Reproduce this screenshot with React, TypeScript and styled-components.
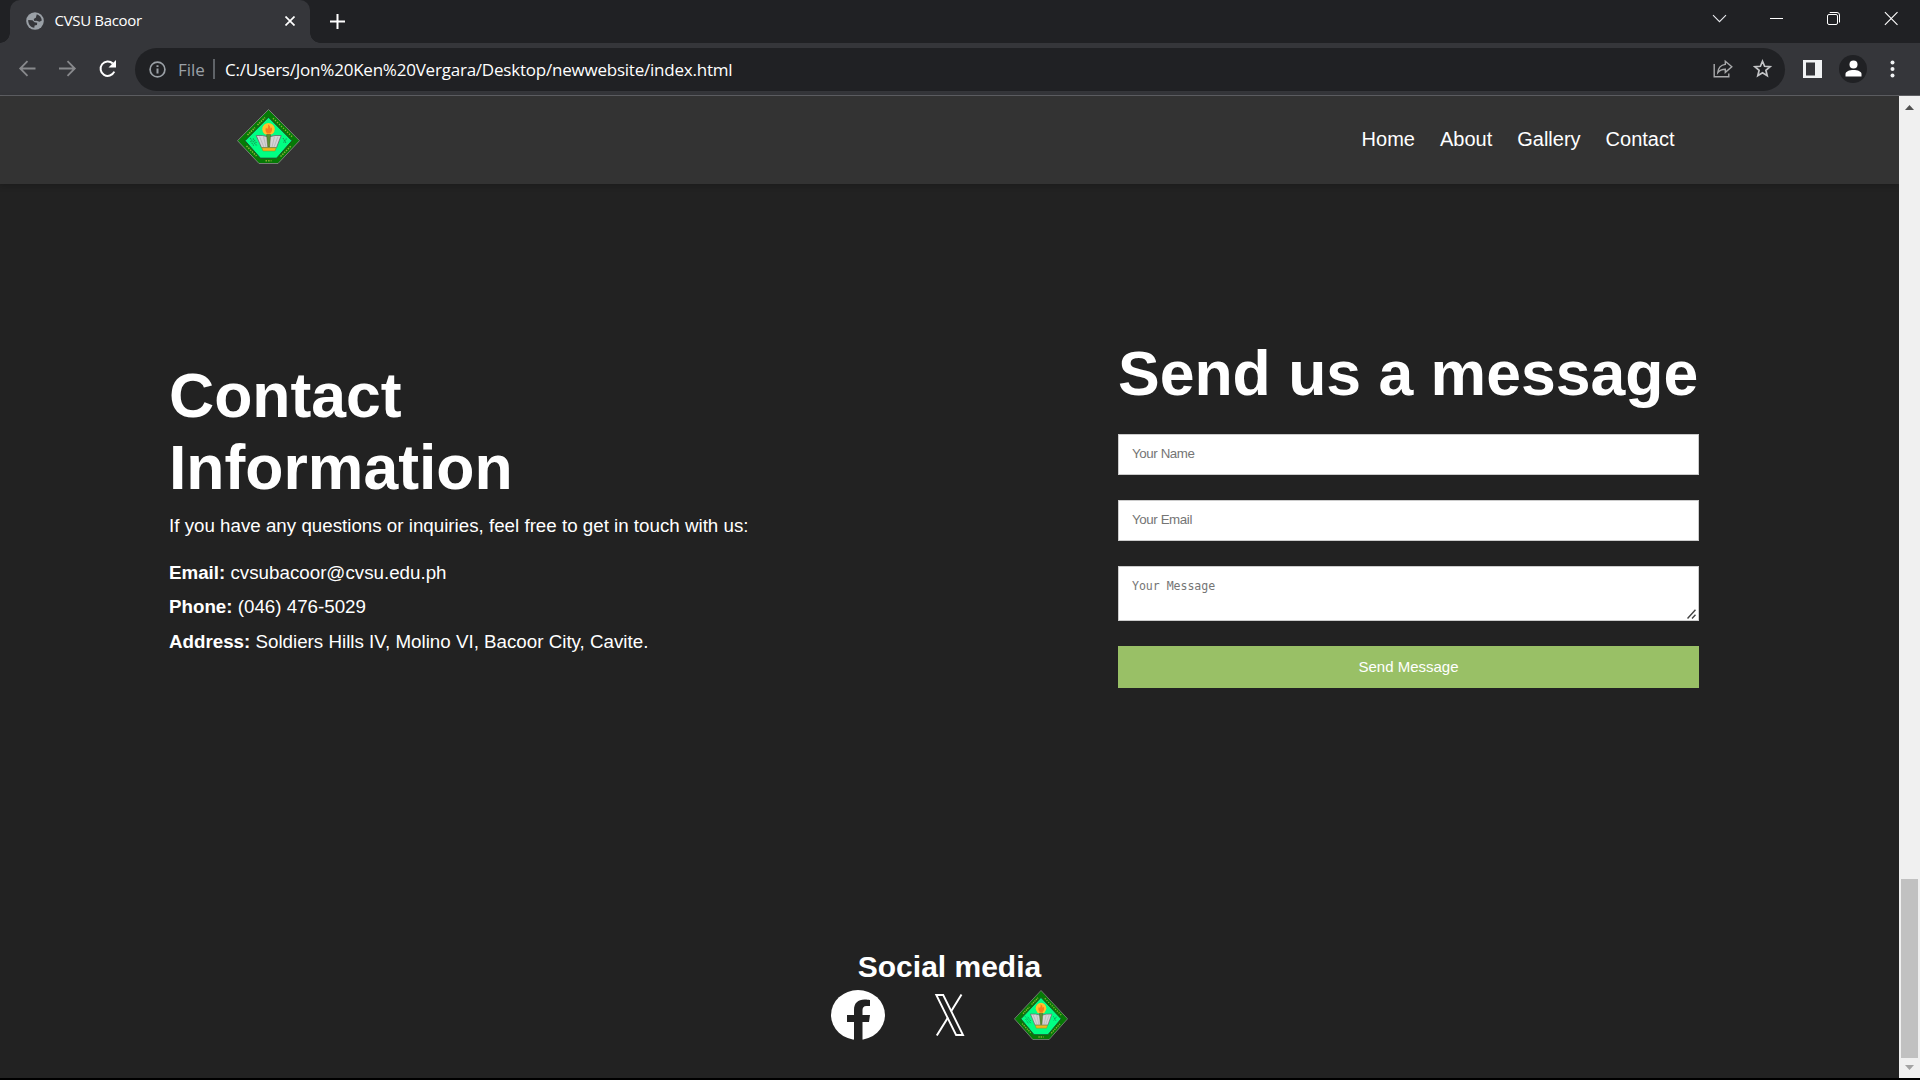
import React from "react";
import styled, { createGlobalStyle } from "styled-components";

const GlobalStyle = createGlobalStyle`
  * { box-sizing: border-box; }
  html, body { margin: 0; padding: 0; background: #000; }
  body { width: 1920px; height: 1080px; overflow: hidden; color: #fff; font-family: "Liberation Sans", Arial, sans-serif; }
  h1, h2, p { margin: 0; }
`;

const Window = styled.div`
  width: 1920px;
  height: 1078px;
  display: flex;
  flex-direction: column;
`;

const uiFont = `"Open Sans", "Noto Sans", sans-serif`;

const TabStrip = styled.div`
  height: 43px;
  flex: none;
  display: flex;
  background: #202124;
`;

const TabFoot = styled.div<{ $side: "left" | "right" }>`
  width: 10px;
  background: radial-gradient(circle at ${(p) => (p.$side === "left" ? "0" : "100%")} calc(100% - 10px), #202124 9.5px, #35363a 10px) bottom / 10px 10px no-repeat;
`;

const Tab = styled.div`
  width: 300px;
  display: flex;
  align-items: center;
  padding: 0 15px 2px 16px;
  border-radius: 10px 10px 0 0;
  background: #35363a;
`;

const TabTitle = styled.span`
  flex: 1;
  margin: 0 0 2px 10.5px;
  font: 15px/20px ${uiFont};
  letter-spacing: -0.32px;
  color: #fff;
`;

const NewTab = styled.div`
  display: flex;
  align-items: center;
  margin-left: 10px;
`;

const WindowControls = styled.div`
  display: flex;
  align-items: flex-start;
  margin-left: auto;
  padding: 10px 20px 0 0;
  gap: 39px;
`;

const Toolbar = styled.div`
  height: 53px;
  flex: none;
  display: flex;
  align-items: center;
  padding-bottom: 1px;
  background: #35363a;
  border-bottom: 1px solid #5f6064;
`;

const NavButtons = styled.div`
  width: 135px;
  display: flex;
  align-items: center;
  padding-left: 18px;
  gap: 20px;
`;

const Omnibox = styled.div`
  width: 1650px;
  height: 43px;
  margin-top: 1px;
  display: flex;
  align-items: center;
  padding: 0 12px 0 14px;
  border-radius: 22px;
  background: #202124;
  font: 17px/24px ${uiFont};
`;

const Scheme = styled.span`
  width: 35px;
  margin: 2px 0 0 12px;
  color: #9aa0a6;
`;

const Divider = styled.span`
  width: 2px;
  height: 20px;
  margin-bottom: 1px;
  background: #5f6368;
`;

const Url = styled.span`
  flex: 1;
  margin: 2px 0 0 10px;
  color: #fff;
  letter-spacing: -0.22px;
  white-space: nowrap;
`;

const OmniActions = styled.div`
  display: flex;
  align-items: center;
  gap: 20px;
`;

const Actions = styled.div`
  display: flex;
  align-items: center;
  margin-left: 18px;
`;

const Avatar = styled.div`
  width: 28px;
  height: 28px;
  margin: 0 23px 0 17px;
  display: flex;
  align-items: center;
  justify-content: center;
  border-radius: 50%;
  background: #202124;
`;

const Viewport = styled.div`
  flex: 1;
  display: flex;
  min-height: 0;
`;

const Page = styled.div`
  width: 1899px;
  display: flex;
  flex-direction: column;
  background: #222;
`;

const Header = styled.header`
  height: 88px;
  flex: none;
  display: flex;
  justify-content: space-between;
  align-items: flex-start;
  padding: 13px 224.5px 0 237px;
  background: #333;
  box-shadow: 0 2px 6px rgba(0, 0, 0, 0.2);
`;

const Nav = styled.nav`
  display: flex;
  gap: 25px;
  padding-top: 18px;
  font-size: 20px;
  line-height: 24px;
`;

const NavLink = styled.a`
  color: #fff;
`;

const Contact = styled.main`
  height: 746px;
  flex: none;
  display: flex;
  justify-content: space-between;
  padding: 0 200px 0 169px;
`;

const Info = styled.section`
  width: 600px;
  padding-top: 175px;
`;

const Title = styled.h1`
  font-size: 62.5px;
  line-height: 72px;
  font-weight: 700;
  white-space: nowrap;
`;

const Line = styled.p<{ $gap?: number }>`
  font-size: 18.75px;
  line-height: 24px;
  margin-top: ${(p) => p.$gap ?? 10.5}px;
  white-space: nowrap;
`;

const Form = styled.form`
  width: 581px;
  display: flex;
  flex-direction: column;
  padding-top: 153px;
`;

const fieldBox = `
  width: 100%;
  border: 1px solid #ccc;
  border-radius: 0;
  background: #fff;
  outline: none;
  display: block;
  &::placeholder { color: #757575; opacity: 1; }
`;

const Fields = styled.div`
  display: flex;
  flex-direction: column;
  gap: 25px;
  padding-top: 25px;
`;

const Field = styled.input`
  ${fieldBox}
  height: 41px;
  padding: 10px 13px 13px;
  font: 13.33px "Liberation Sans", Arial, sans-serif;
  letter-spacing: -0.4px;
`;

const MessageBox = styled.div`
  position: relative;
`;

const MessageField = styled.textarea`
  ${fieldBox}
  height: 55px;
  padding: 12px 13px;
  font: 11.6px/15px "DejaVu Sans Mono", monospace;
  letter-spacing: -0.05px;
  resize: none;
`;

const Grip = styled.svg`
  position: absolute;
  right: 3px;
  bottom: 2px;
`;

const SendButton = styled.button`
  height: 42px;
  padding: 0 0 2px;
  border: 0;
  background: #99c066;
  color: #fff;
  font: 15px "Liberation Sans", Arial, sans-serif;
`;

const Social = styled.footer`
  display: flex;
  flex-direction: column;
  align-items: center;
  padding-top: 20px;
`;

const SocialTitle = styled.h2`
  font-size: 30px;
  line-height: 34px;
  margin-bottom: 6px;
`;

const SocialLinks = styled.div`
  display: flex;
  gap: 37.5px;
`;

const Scrollbar = styled.div`
  width: 21px;
  display: flex;
  flex-direction: column;
  align-items: center;
  background: #f0f0f0;
`;

const Arrow = styled.div<{ $down?: boolean }>`
  width: 9px;
  height: 5px;
  margin: ${(p) => (p.$down ? "7px 0 0" : "9px 0 0")};
  background: ${(p) => (p.$down ? "#a3a3a3" : "#505050")};
  clip-path: ${(p) => (p.$down ? "polygon(0 0, 100% 0, 50% 100%)" : "polygon(50% 0, 100% 100%, 0 100%)")};
`;

const Thumb = styled.div`
  width: 17px;
  height: 179px;
  margin-top: auto;
  background: #c1c1c1;
`;

const ScrollEnd = styled.div`
  height: 20px;
`;

function Emblem({ width, height }: { width: number; height: number }) {
  return (
    <svg width={width} height={height} viewBox="0 0 63 55" preserveAspectRatio="none">
      <path d="M31.5 .5 62.5 31.7 41 54.5H22L.5 31.7Z" fill="#067a06" stroke="#858585" strokeWidth=".9" />
      <path d="M10.5 26 18 18.6M20.5 16 28 8.6" stroke="#8cae35" strokeWidth="1.6" strokeDasharray="1.5 .9" />
      <path d="M36 9.2 56 28.5" stroke="#8cae35" strokeWidth="1.5" strokeDasharray="1.3 1.5" />
      <path d="M9.5 37 19.5 47M43.5 47.5 54 37M28.5 51.7H34.5" stroke="#8cae35" strokeWidth="1.5" strokeDasharray="1.5 1.1" />
      <path d="M31.5 8.2 55 31.7 39.6 49.2H23.4L8 31.7Z" fill="#00ff83" stroke="#24452c" strokeWidth="1" />
      <path d="M13 29 20 37M13.5 32 17 37M16 29.5 19.5 34M46 29 49 34M49.5 29.5 46.5 33.5" stroke="#149a56" strokeWidth="1.1" strokeDasharray="1.4 .7" />
      <circle cx="31.5" cy="20.2" r="6.2" fill="#ffc02c" />
      <path d="M31 15.5Q34 17.5 33.2 19.5L34.8 18.5Q36 22 33 24.5H30.2Q27.5 22 29 18.5L30.2 20Q31.8 18 31 15.5Z" fill="#fb7a1c" />
      <path d="M19.2 26.5Q26 26 30 27.5H33.5Q37 26 44.2 26.5L39.5 38.7H24.5Z" fill="#d6d3d6" stroke="#666" strokeWidth=".8" />
      <path d="M22.5 27.5 26.8 38M41 27.5 37 38M26.5 27.5 29 38M37.5 27.5 35 38" stroke="#aaa" strokeWidth=".6" />
      <path d="M29.6 25.5H33.6L32.6 38H30.8Z" fill="#5c9130" stroke="#405a28" strokeWidth=".5" />
      <path d="M24.8 38.7H39.2L38 42H26Z" fill="#f1b51c" stroke="#7b8c20" strokeWidth=".5" />
    </svg>
  );
}

function BackIcon({ flip }: { flip?: boolean }) {
  return (
    <svg width="20" height="20" viewBox="0 0 20 20" fill="none" stroke="#88898c" strokeWidth="1.8">
      <path d={flip ? "M1 9.5H16.5M9.5 2.2 16.8 9.5 9.5 16.8" : "M17.5 9.5H2.2M9.5 2.2 2.2 9.5 9.5 16.8"} />
    </svg>
  );
}

export default function App() {
  return (
    <>
      <GlobalStyle />
      <Window>
        <TabStrip>
          <TabFoot $side="left" />
          <Tab>
            <svg width="18" height="18" viewBox="0 0 18 18">
              <circle cx="9" cy="9" r="8.8" fill="#9aa0a6" />
              <path d="M10.8 2.2C13.5 3 15.7 5.5 15.8 8.5L13.5 9.8 10.5 8.8 8.3 9 7.7 6.9 9.8 5.7ZM2.2 8 6.5 8.2 8.5 10.3 11.2 10.7 11 13 8.6 13.5 8.3 15.7C4.5 15.5 2 12 2.2 8Z" fill="#35363a" />
            </svg>
            <TabTitle>CVSU Bacoor</TabTitle>
            <svg width="10" height="10" viewBox="0 0 10 10" stroke="#fff" strokeWidth="1.7">
              <path d="M.5.5 9.5 9.5M9.5.5.5 9.5" />
            </svg>
          </Tab>
          <TabFoot $side="right" />
          <NewTab>
            <svg width="15" height="15" viewBox="0 0 15 15" stroke="#fff" strokeWidth="2">
              <path d="M7.5 0V15M0 7.5H15" />
            </svg>
          </NewTab>
          <WindowControls>
            <svg width="18" height="18" viewBox="0 0 18 18" fill="none" stroke="#e8eaed" strokeWidth="1.1">
              <path d="M2 5.2 8.5 11.7 15 5.2" />
            </svg>
            <svg width="18" height="18" viewBox="0 0 18 18" stroke="#fff">
              <path d="M2 8.5H15" />
            </svg>
            <svg width="18" height="18" viewBox="0 0 18 18" fill="none" stroke="#fff">
              <rect x="2.5" y="4.5" width="10" height="10" rx="1.5" />
              <path d="M4.7 2.5H12Q14.5 2.5 14.5 5V12.5" />
            </svg>
            <svg width="18" height="18" viewBox="0 0 18 18" stroke="#fff" strokeWidth="1.1">
              <path d="M2.9 2.2 15.5 14.8M15.5 2.2 2.9 14.8" />
            </svg>
          </WindowControls>
        </TabStrip>
        <Toolbar>
          <NavButtons>
            <BackIcon />
            <BackIcon flip />
            <svg width="20" height="20" viewBox="0 0 20 20">
              <path d="M16.3 12.7A7.2 7.2 0 1 1 14.8 4.5" fill="none" stroke="#fff" strokeWidth="2" />
              <path d="M18 1V8.5H10.5Z" fill="#fff" />
            </svg>
          </NavButtons>
          <Omnibox>
            <svg width="17" height="17" viewBox="0 0 17 17" fill="none" stroke="#9aa0a6" strokeWidth="1.7">
              <circle cx="8.5" cy="8.5" r="7.4" />
              <path d="M8.5 7.5V12.6M8.5 4.2V6" strokeWidth="2" />
            </svg>
            <Scheme>File</Scheme>
            <Divider />
            <Url>C:/Users/Jon%20Ken%20Vergara/Desktop/newwebsite/index.html</Url>
            <OmniActions>
              <svg width="20" height="20" viewBox="0 0 20 20" fill="none" stroke="#a9aaac" strokeWidth="1.4">
                <path d="M1.2 5V17.8H15.8V14.5" />
                <path d="M12.3 2.2 18.8 7.8 12.3 13.4V10.2C8.5 10.2 6.5 11.2 4.8 13.6 5.2 9 8 6 12.3 5.4Z" />
              </svg>
              <svg width="20" height="20" viewBox="0 0 20 20" fill="none" stroke="#c4c5c7" strokeWidth="1.7">
                <path d="M9.5 2.2 11.6 7.3 17.1 7.7 12.9 11.3 14.2 16.7 9.5 13.8 4.8 16.7 6.1 11.3 1.9 7.7 7.4 7.3Z" />
              </svg>
            </OmniActions>
          </Omnibox>
          <Actions>
            <svg width="19" height="18" viewBox="0 0 19 18">
              <path d="M0 0H19V18H0ZM3 2.5V15.5H12V2.5Z" fill="#f1f3f4" fillRule="evenodd" />
            </svg>
            <Avatar>
              <svg width="17" height="17" viewBox="0 0 17 17" fill="#fff">
                <circle cx="8.5" cy="4.5" r="4" />
                <path d="M.5 16.5V14C.5 11.5 4.5 10 8.5 10S16.5 11.5 16.5 14V16.5Z" />
              </svg>
            </Avatar>
            <svg width="5" height="18" viewBox="0 0 5 18" fill="#f1f3f4">
              <circle cx="2.5" cy="2.4" r="2" />
              <circle cx="2.5" cy="9" r="2" />
              <circle cx="2.5" cy="15.6" r="2" />
            </svg>
          </Actions>
        </Toolbar>
        <Viewport>
          <Page>
            <Header>
              <Emblem width={63} height={55} />
              <Nav>
                <NavLink>Home</NavLink>
                <NavLink>About</NavLink>
                <NavLink>Gallery</NavLink>
                <NavLink>Contact</NavLink>
              </Nav>
            </Header>
            <Contact>
              <Info>
                <Title>Contact<br />Information</Title>
                <Line $gap={11}>If you have any questions or inquiries, feel free to get in touch with us:</Line>
                <Line $gap={23}><b>Email:</b> cvsubacoor@cvsu.edu.ph</Line>
                <Line $gap={10.4}><b>Phone:</b> (046) 476-5029</Line>
                <Line $gap={10.4}><b>Address:</b> Soldiers Hills IV, Molino VI, Bacoor City, Cavite.</Line>
              </Info>
              <Form>
                <Title>Send us a message</Title>
                <Fields>
                  <Field placeholder="Your Name" />
                  <Field placeholder="Your Email" />
                  <MessageBox>
                    <MessageField placeholder="Your Message" />
                    <Grip width="9" height="10" viewBox="0 0 9 10" stroke="#444" strokeWidth="1.5">
                      <path d="M.5 9.5 8.5 .8M5 9.5 8.5 5.8" />
                    </Grip>
                  </MessageBox>
                  <SendButton type="button">Send Message</SendButton>
                </Fields>
              </Form>
            </Contact>
            <Social>
              <SocialTitle>Social media</SocialTitle>
              <SocialLinks>
                <svg width="54" height="50" viewBox="0 0 54 50" preserveAspectRatio="none">
                  <ellipse cx="27" cy="25" rx="27" ry="25" fill="#fff" />
                  <path d="M23 50V32H16V25H23V20C23 13 27 9.5 33.5 9.5 36 9.5 39 10 39 10V16H35.5C32.5 16 31.5 17.8 31.5 20V25H39L38 32H31.5V50Z" fill="#222" />
                </svg>
                <svg width="54" height="50" viewBox="0 0 54 50" fill="none" stroke="#fff">
                  <path d="M13.3 5H20.2L40 45H33.1Z" strokeWidth="1.9" />
                  <path d="M38.5 4.5 28 21.5M25 27.5 13.8 45.5" strokeWidth="2" />
                </svg>
                <Emblem width={54} height={50} />
              </SocialLinks>
            </Social>
          </Page>
          <Scrollbar>
            <Arrow />
            <Thumb />
            <ScrollEnd><Arrow $down /></ScrollEnd>
          </Scrollbar>
        </Viewport>
      </Window>
    </>
  );
}
